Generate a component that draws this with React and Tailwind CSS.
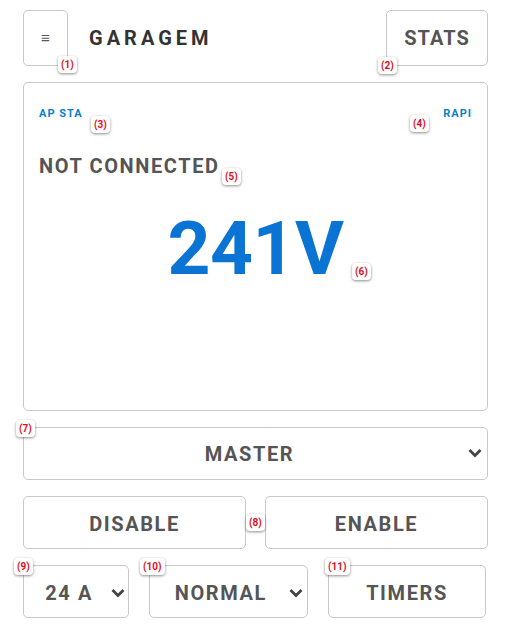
import React from 'react';

const Badge = ({ n, className }) => (
    <span
        className={`absolute z-10 flex items-center justify-center h-[17px] px-[3px] rounded-[4px] bg-white text-[10px] font-bold text-[#e0101a] shadow-[0_1px_3px_rgba(0,0,0,0.45)] leading-none ${className}`}
    >
        ({n})
    </span>
);

const Chevron = () => (
    <svg width="14" height="10" viewBox="0 0 14 10" className="shrink-0">
        <path d="M1.5 2 L7 7.5 L12.5 2" fill="none" stroke="#444" strokeWidth="2.8" />
    </svg>
);

const App = () => {
    return (
        <div className="relative w-[505px] h-[634px] bg-white font-['Roboto','Liberation_Sans',sans-serif] overflow-hidden">
            <div className="w-[465px] ml-[23px] pt-[10px] flex flex-col gap-4">
                {/* Header */}
                <header className="flex items-center h-[56px]">
                    <button className="w-[45px] h-[56px] border border-[#c8c8c8] rounded-[5px] text-[#555] text-[15px] leading-none">
                        ≡
                    </button>
                    <h1 className="ml-[21px] text-[20px] font-bold tracking-[4px] text-[#333]">GARAGEM</h1>
                    <button className="ml-auto w-[102px] h-[56px] border border-[#c8c8c8] rounded-[5px] text-[20px] font-bold tracking-[1px] text-[#555]">
                        STATS
                    </button>
                </header>

                {/* Status panel */}
                <section className="h-[329px] border border-[#c8c8c8] rounded-[5px] px-[15px] pt-[24px]">
                    <div className="flex justify-between text-[11px] font-bold tracking-[1px] text-[#0a82c8] leading-[14px]">
                        <span>AP STA</span>
                        <span>RAPI</span>
                    </div>
                    <p className="mt-[34px] text-[20px] font-bold tracking-[1.6px] text-[#555] leading-[22px]">NOT CONNECTED</p>
                    <p className="mt-[31px] text-center text-[75px] font-bold tracking-[-0.5px] text-[#0a74d4] leading-[80px]">241V</p>
                </section>

                {/* Mode select */}
                <div className="relative h-[53px] border border-[#c8c8c8] rounded-[5px] flex items-center justify-center">
                    <span className="text-[20px] font-bold tracking-[1.6px] text-[#555] ml-[-12px]">MASTER</span>
                    <span className="absolute right-[5px] top-[20px]"><Chevron /></span>
                </div>

                <div className="flex gap-[19px]">
                    <button className="flex-1 h-[53px] border border-[#c8c8c8] rounded-[5px] text-[20px] font-bold tracking-[1.6px] text-[#555] pt-[2px]">
                        DISABLE
                    </button>
                    <button className="flex-1 h-[53px] border border-[#c8c8c8] rounded-[5px] text-[20px] font-bold tracking-[1.6px] text-[#555] pt-[2px]">
                        ENABLE
                    </button>
                </div>

                <div className="flex gap-[20px] w-[463px]">
                    <div className="w-[106px] h-[53px] border border-[#c8c8c8] rounded-[5px] flex items-center justify-end gap-[18px] pr-[3px] pt-[2px]">
                        <span className="text-[20px] font-bold tracking-[1.6px] text-[#555]">24 A</span>
                        <Chevron />
                    </div>
                    <div className="w-[159px] h-[53px] border border-[#c8c8c8] rounded-[5px] flex items-center justify-end gap-[22px] pr-[4px] pt-[2px]">
                        <span className="text-[20px] font-bold tracking-[1.6px] text-[#555]">NORMAL</span>
                        <Chevron />
                    </div>
                    <button className="flex-1 h-[53px] border border-[#c8c8c8] rounded-[5px] text-[20px] font-bold tracking-[1.6px] text-[#555] pt-[2px]">
                        TIMERS
                    </button>
                </div>
            </div>

            {/* Annotation badges */}
            <Badge n={1} className="left-[58px] top-[56px]" />
            <Badge n={2} className="left-[378px] top-[57px]" />
            <Badge n={3} className="left-[91px] top-[116px]" />
            <Badge n={4} className="left-[410px] top-[115px]" />
            <Badge n={5} className="left-[222px] top-[168px]" />
            <Badge n={6} className="left-[352px] top-[263px]" />
            <Badge n={7} className="left-[16px] top-[420px]" />
            <Badge n={8} className="left-[246px] top-[514px]" />
            <Badge n={9} className="left-[14px] top-[558px]" />
            <Badge n={10} className="left-[140px] top-[558px]" />
            <Badge n={11} className="left-[325px] top-[558px]" />
        </div>
    );
};

export default App;
